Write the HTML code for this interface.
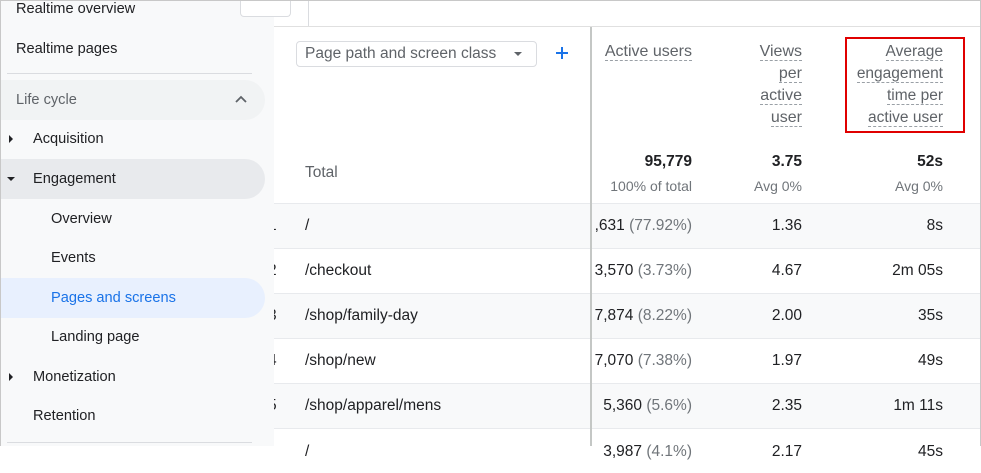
<!DOCTYPE html>
<html><head><style>
*{margin:0;padding:0;box-sizing:border-box}
body{width:981px;height:446px;overflow:hidden;background:#fff;font-family:"Liberation Sans",Arial,sans-serif;position:relative;color:#202124}
.a{position:absolute;white-space:nowrap}
#sb{position:absolute;left:0;top:0;width:274px;height:446px;background:#f8f9fa;border-left:1px solid #c8c8c8;z-index:5}
.pill{position:absolute;left:0;width:264px;height:40px;border-radius:0 20px 20px 0}
.nav{font-size:14.6px;color:#202124}
.hd{font-size:15px;color:#5f6368;text-align:right;line-height:22px}
.hd span{border-bottom:1px dashed #9aa0a6}
.row{position:absolute;left:274px;width:707px;height:45px;border-top:1px solid #e8eaed}
.c{font-size:15.5px;color:#202124}
.g{color:#70757a}
</style></head><body>
<div style="position:absolute;left:0;top:0;width:981px;height:1px;background:#c8c8c8;z-index:9"></div>
<div style="position:absolute;right:0;top:0;width:1px;height:446px;background:#c8c8c8;z-index:9"></div>
<div style="position:absolute;left:274px;top:26px;width:707px;height:1px;background:#e0e0e0"></div>
<div style="position:absolute;left:240px;top:0;width:51px;height:17px;border:1px solid #dadce0;border-top:none;border-radius:0 0 4px 4px;background:#fff;z-index:6"></div>
<div style="position:absolute;left:308px;top:0;width:1px;height:26px;background:#dadce0"></div>

<div id="sb">
<div class="a nav" style="left:15px;top:1px">Realtime overview</div>
<div class="a nav" style="left:15px;top:41px">Realtime pages</div>
<div style="position:absolute;left:6px;top:73px;width:245px;height:1px;background:#dadce0"></div>
<div class="pill" style="top:80px;background:#f1f3f4"></div>
<div class="a nav" style="left:15px;top:92px;color:#5f6368">Life cycle</div>
<svg class="a" style="left:233px;top:94px" width="14" height="10"><path d="M2 8L7 3L12 8" stroke="#5f6368" stroke-width="1.8" fill="none"/></svg>
<div class="a" style="left:8px;top:135px;width:0;height:0;border-top:4px solid transparent;border-bottom:4px solid transparent;border-left:4px solid #202124"></div>
<div class="a nav" style="left:32px;top:131px">Acquisition</div>
<div class="pill" style="top:159px;background:#e8eaed"></div>
<div class="a" style="left:6px;top:177px;width:0;height:0;border-left:4px solid transparent;border-right:4px solid transparent;border-top:4px solid #202124"></div>
<div class="a nav" style="left:32px;top:171px">Engagement</div>
<div class="a nav" style="left:50px;top:211px">Overview</div>
<div class="a nav" style="left:50px;top:250px">Events</div>
<div class="pill" style="top:278px;background:#e8f0fe"></div>
<div class="a nav" style="left:50px;top:290px;color:#1a73e8">Pages and screens</div>
<div class="a nav" style="left:50px;top:329px">Landing page</div>
<div class="a" style="left:8px;top:373px;width:0;height:0;border-top:4px solid transparent;border-bottom:4px solid transparent;border-left:4px solid #202124"></div>
<div class="a nav" style="left:32px;top:369px">Monetization</div>
<div class="a nav" style="left:32px;top:408px">Retention</div>
<div style="position:absolute;left:6px;top:442px;width:245px;height:1px;background:#dadce0"></div>
</div>

<div class="a" style="left:296px;top:41px;width:241px;height:26px;border:1px solid #dadce0;border-radius:4px"></div>
<div class="a" style="left:305px;top:45px;font-size:15.5px;color:#5f6368">Page path and screen class</div>
<div class="a" style="left:514px;top:52px;width:0;height:0;border-left:4px solid transparent;border-right:4px solid transparent;border-top:4px solid #5f6368"></div>
<svg class="a" style="left:555px;top:46px" width="14" height="14"><path d="M7 1V13M1 7H13" stroke="#1a73e8" stroke-width="2"/></svg>

<div class="a hd" style="right:289px;top:41px;font-size:16px"><span>Active users</span></div>
<div class="a hd" style="right:179px;top:41px;font-size:16px"><span>Views</span><br><span>per</span><br><span>active</span><br><span>user</span></div>
<div class="a hd" style="right:38px;top:41px;font-size:15.5px"><span>Average</span><br><span>engagement</span><br><span>time per</span><br><span>active user</span></div>
<div class="a" style="left:845px;top:37px;width:120px;height:96px;border:2px solid #e00000"></div>

<div class="a" style="left:305px;top:164px;font-size:15.5px;color:#5f6368">Total</div>
<div class="a" style="right:289px;top:153px;font-size:15.5px;font-weight:bold">95,779</div>
<div class="a" style="right:289px;top:178px;font-size:14px;color:#70757a">100% of total</div>
<div class="a" style="right:179px;top:153px;font-size:15.5px;font-weight:bold">3.75</div>
<div class="a" style="right:179px;top:178px;font-size:14px;color:#70757a">Avg 0%</div>
<div class="a" style="right:38px;top:153px;font-size:15.5px;font-weight:bold">52s</div>
<div class="a" style="right:38px;top:178px;font-size:14px;color:#70757a">Avg 0%</div>

<div class="row" style="top:203px;background:#f8f9fa"></div>
<div class="row" style="top:248px"></div>
<div class="row" style="top:293px;background:#f8f9fa"></div>
<div class="row" style="top:338px"></div>
<div class="row" style="top:383px;background:#f8f9fa"></div>
<div class="row" style="top:428px"></div>

<div class="a c" style="left:268px;top:217px">1</div><div class="a c" style="left:305px;top:217px">/</div>
<div class="a c" style="right:289px;top:217px">,631 <span class="g">(77.92%)</span></div><div class="a c" style="right:179px;top:217px">1.36</div><div class="a c" style="right:38px;top:217px">8s</div>
<div class="a c" style="left:268px;top:262px">2</div><div class="a c" style="left:305px;top:262px">/checkout</div>
<div class="a c" style="right:289px;top:262px">3,570 <span class="g">(3.73%)</span></div><div class="a c" style="right:179px;top:262px">4.67</div><div class="a c" style="right:38px;top:262px">2m 05s</div>
<div class="a c" style="left:268px;top:307px">3</div><div class="a c" style="left:305px;top:307px">/shop/family-day</div>
<div class="a c" style="right:289px;top:307px">7,874 <span class="g">(8.22%)</span></div><div class="a c" style="right:179px;top:307px">2.00</div><div class="a c" style="right:38px;top:307px">35s</div>
<div class="a c" style="left:268px;top:352px">4</div><div class="a c" style="left:305px;top:352px">/shop/new</div>
<div class="a c" style="right:289px;top:352px">7,070 <span class="g">(7.38%)</span></div><div class="a c" style="right:179px;top:352px">1.97</div><div class="a c" style="right:38px;top:352px">49s</div>
<div class="a c" style="left:268px;top:397px">5</div><div class="a c" style="left:305px;top:397px">/shop/apparel/mens</div>
<div class="a c" style="right:289px;top:397px">5,360 <span class="g">(5.6%)</span></div><div class="a c" style="right:179px;top:397px">2.35</div><div class="a c" style="right:38px;top:397px">1m 11s</div>
<div class="a c" style="left:305px;top:443px">/</div>
<div class="a c" style="right:289px;top:443px">3,987 <span class="g">(4.1%)</span></div><div class="a c" style="right:179px;top:443px">2.17</div><div class="a c" style="right:38px;top:443px">45s</div>

<div style="position:absolute;left:590px;top:27px;width:2px;height:419px;background:#c4c7c5"></div>
</body></html>
